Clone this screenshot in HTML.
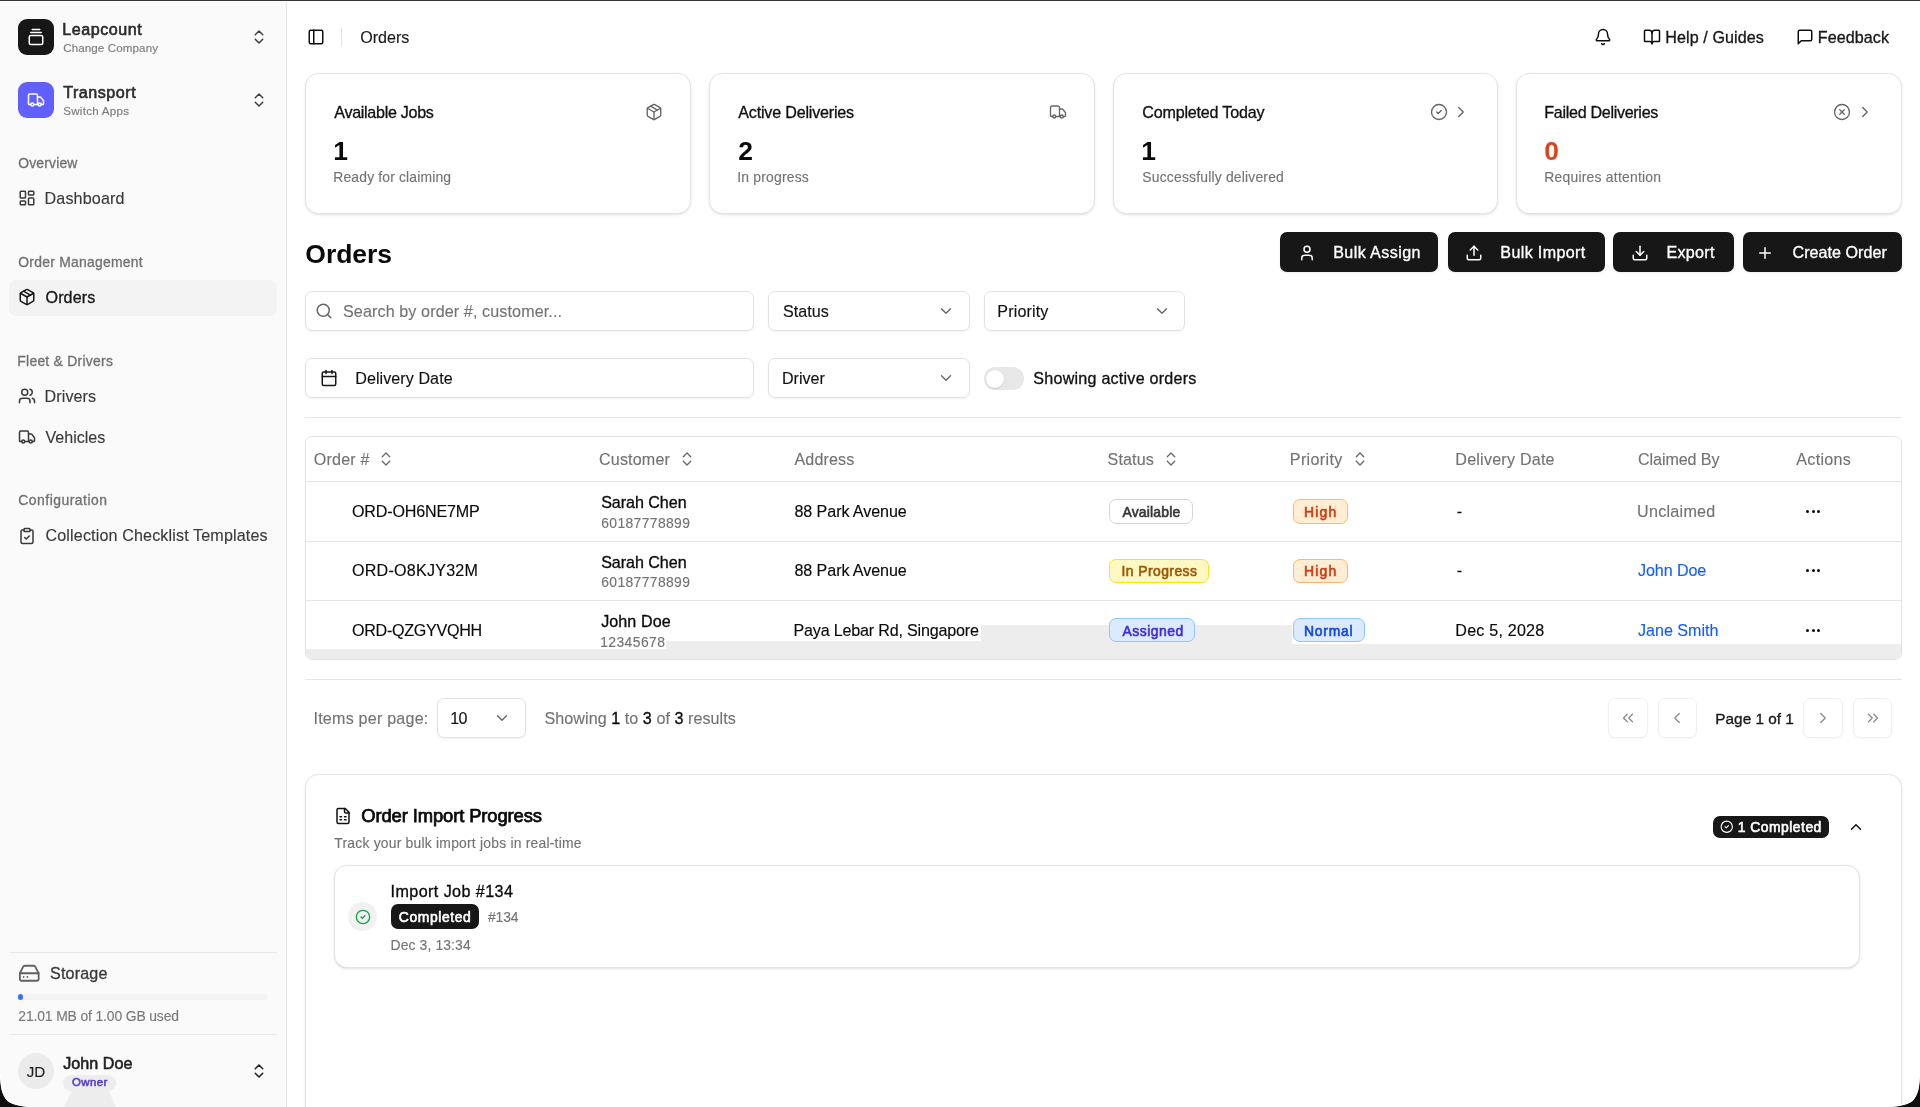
<!DOCTYPE html>
<html lang="en">
<head>
<meta charset="utf-8">
<title>Orders - Transport</title>
<style>
*{box-sizing:border-box;margin:0;padding:0}
html,body{width:1920px;height:1107px;overflow:hidden;background:#fff}
body{position:relative;font-family:"Liberation Sans",sans-serif;color:#0a0a0a;-webkit-font-smoothing:antialiased}
#app{position:absolute;left:0;top:0;width:1920px;height:1107px;will-change:transform}
.t{position:absolute;white-space:nowrap;line-height:1;font-weight:400;-webkit-text-stroke:.14px currentColor}
.t b{font-weight:400;color:#0a0a0a;-webkit-text-stroke:.32px #0a0a0a}
.w5{-webkit-text-stroke:.32px currentColor}
.w6{-webkit-text-stroke:.6px currentColor}
.w65{-webkit-text-stroke:.75px currentColor}
.w7{font-weight:700;-webkit-text-stroke:0}
.i{position:absolute;display:block;overflow:visible}
.abs{position:absolute}
.card{position:absolute;background:#fff;border:1px solid #e4e4e4;border-radius:13.5px;box-shadow:0 1px 3px rgba(0,0,0,.10),0 1px 2px -1px rgba(0,0,0,.10)}
.field{position:absolute;background:#fff;border:1px solid #e2e2e2;border-radius:7px;box-shadow:0 1px 2px rgba(0,0,0,.06)}
.btn{position:absolute;background:#171717;border-radius:7px;box-shadow:0 1px 2px rgba(0,0,0,.08)}
.pg{position:absolute;background:#fff;border:1px solid #efefef;border-radius:7px;box-shadow:0 1px 2px rgba(0,0,0,.04)}
.hl{position:absolute;height:1px;background:#e5e5e5}
.badge{position:absolute;border-radius:7px;border:1px solid transparent}
</style>
</head>
<body>
<div id="app">

<aside class="abs" style="left:0;top:2px;width:287px;height:1105px;background:#fafafa;border-right:1px solid #e6e6e6"></aside>
<nav>
<div class="abs" style="left:18px;top:19px;width:36px;height:36px;border-radius:9px;background:#171717"></div>
<svg class="i" style="left:27px;top:27.75px" width="18" height="18" viewBox="0 0 24 24" fill="none" stroke="#fff" stroke-width="2" stroke-linecap="round" stroke-linejoin="round"><path d="M7 2h10"/><path d="M5 6h14"/><rect width="18" height="12" x="3" y="10" rx="2"/></svg>
<span class="t w6" style="left:62.20px;top:21.00px;font-size:16.1px;color:#2b2b2b;letter-spacing:0.535px;">Leapcount</span>
<span class="t" style="left:63.20px;top:42.00px;font-size:11.6px;color:#7a7a7a;letter-spacing:0.103px;">Change Company</span>
<svg class="i" style="left:250px;top:28.2px" width="18" height="18" viewBox="0 0 24 24" fill="none" stroke="#3f3f3f" stroke-width="2" stroke-linecap="round" stroke-linejoin="round"><path d="m7 15 5 5 5-5"/><path d="m7 9 5-5 5 5"/></svg>
<div class="abs" style="left:18px;top:82px;width:36px;height:36px;border-radius:9px;background:#625fff"></div>
<svg class="i" style="left:26.7px;top:90.9px" width="18" height="18" viewBox="0 0 24 24" fill="none" stroke="#fff" stroke-width="2" stroke-linecap="round" stroke-linejoin="round"><path d="M14 18V6a2 2 0 0 0-2-2H4a2 2 0 0 0-2 2v11a1 1 0 0 0 1 1h2"/><path d="M15 18H9"/><path d="M19 18h2a1 1 0 0 0 1-1v-3.65a1 1 0 0 0-.22-.624l-3.48-4.35A1 1 0 0 0 17.52 8H14"/><circle cx="17" cy="18" r="2"/><circle cx="7" cy="18" r="2"/></svg>
<span class="t w6" style="left:63.20px;top:84.00px;font-size:16.1px;color:#2b2b2b;letter-spacing:0.524px;">Transport</span>
<span class="t" style="left:63.20px;top:105.00px;font-size:11.6px;color:#7a7a7a;letter-spacing:0.264px;">Switch Apps</span>
<svg class="i" style="left:250px;top:91px" width="18" height="18" viewBox="0 0 24 24" fill="none" stroke="#3f3f3f" stroke-width="2" stroke-linecap="round" stroke-linejoin="round"><path d="m7 15 5 5 5-5"/><path d="m7 9 5-5 5 5"/></svg>

<span class="t w5" style="left:18.30px;top:157.00px;font-size:13.9px;color:#717171;letter-spacing:0.163px;">Overview</span>
<svg class="i" style="left:17.9px;top:189.4px" width="18" height="18" viewBox="0 0 24 24" fill="none" stroke="#3a3a3a" stroke-width="2" stroke-linecap="round" stroke-linejoin="round"><rect width="7" height="9" x="3" y="3" rx="1"/><rect width="7" height="5" x="14" y="3" rx="1"/><rect width="7" height="9" x="14" y="12" rx="1"/><rect width="7" height="5" x="3" y="16" rx="1"/></svg><span class="t" style="left:44.50px;top:190.00px;font-size:16.1px;color:#3a3a3a;letter-spacing:0.152px;">Dashboard</span>
<span class="t w5" style="left:18.30px;top:256.00px;font-size:13.9px;color:#717171;letter-spacing:0.254px;">Order Management</span>
<div class="abs" style="left:9px;top:280px;width:268px;height:36px;border-radius:7px;background:#f3f3f3"></div>
<svg class="i" style="left:17.9px;top:288.4px" width="18" height="18" viewBox="0 0 24 24" fill="none" stroke="#171717" stroke-width="2" stroke-linecap="round" stroke-linejoin="round"><path d="M11 21.73a2 2 0 0 0 2 0l7-4A2 2 0 0 0 21 16V8a2 2 0 0 0-1-1.73l-7-4a2 2 0 0 0-2 0l-7 4A2 2 0 0 0 3 8v8a2 2 0 0 0 1 1.73z"/><path d="M12 22V12"/><polyline points="3.29 7 12 12 20.71 7"/><path d="m7.5 4.27 9 5.15"/></svg><span class="t w5" style="left:45.50px;top:289.00px;font-size:16.1px;color:#171717;letter-spacing:0.112px;">Orders</span>
<span class="t w5" style="left:17.30px;top:355.00px;font-size:13.9px;color:#717171;letter-spacing:0.263px;">Fleet &amp; Drivers</span>
<svg class="i" style="left:17.9px;top:387.4px" width="18" height="18" viewBox="0 0 24 24" fill="none" stroke="#3a3a3a" stroke-width="2" stroke-linecap="round" stroke-linejoin="round"><path d="M16 21v-2a4 4 0 0 0-4-4H6a4 4 0 0 0-4 4v2"/><circle cx="9" cy="7" r="4"/><path d="M22 21v-2a4 4 0 0 0-3-3.87"/><path d="M16 3.13a4 4 0 0 1 0 7.75"/></svg><span class="t" style="left:44.50px;top:388.00px;font-size:16.1px;color:#3a3a3a;letter-spacing:0.113px;">Drivers</span>
<svg class="i" style="left:17.9px;top:428.4px" width="18" height="18" viewBox="0 0 24 24" fill="none" stroke="#3a3a3a" stroke-width="2" stroke-linecap="round" stroke-linejoin="round"><path d="M14 18V6a2 2 0 0 0-2-2H4a2 2 0 0 0-2 2v11a1 1 0 0 0 1 1h2"/><path d="M15 18H9"/><path d="M19 18h2a1 1 0 0 0 1-1v-3.65a1 1 0 0 0-.22-.624l-3.48-4.35A1 1 0 0 0 17.52 8H14"/><circle cx="17" cy="18" r="2"/><circle cx="7" cy="18" r="2"/></svg><span class="t" style="left:45.50px;top:429.00px;font-size:16.1px;color:#3a3a3a;letter-spacing:-0.015px;">Vehicles</span>
<span class="t w5" style="left:18.30px;top:494.00px;font-size:13.9px;color:#717171;letter-spacing:0.500px;">Configuration</span>
<svg class="i" style="left:17.9px;top:526.8px" width="18" height="18" viewBox="0 0 24 24" fill="none" stroke="#3a3a3a" stroke-width="2" stroke-linecap="round" stroke-linejoin="round"><rect width="8" height="4" x="8" y="2" rx="1" ry="1"/><path d="M16 4h2a2 2 0 0 1 2 2v14a2 2 0 0 1-2 2H6a2 2 0 0 1-2-2V6a2 2 0 0 1 2-2h2"/><path d="m9 14 2 2 4-4"/></svg><span class="t" style="left:45.50px;top:527.00px;font-size:16.1px;color:#3a3a3a;letter-spacing:0.141px;">Collection Checklist Templates</span>

<div class="hl" style="left:9px;top:952px;width:268px;background:#e8e8e8"></div>
<svg class="i" style="left:17.9px;top:962.3px" width="22.5" height="22.5" viewBox="0 0 24 24" fill="none" stroke="#606060" stroke-width="1.9" stroke-linecap="round" stroke-linejoin="round"><line x1="22" x2="2" y1="12" y2="12"/><path d="M5.45 5.11 2 12v6a2 2 0 0 0 2 2h16a2 2 0 0 0 2-2v-6l-3.45-6.89A2 2 0 0 0 16.76 4H7.24a2 2 0 0 0-1.79 1.11z"/><line x1="6" x2="6.01" y1="16" y2="16"/><line x1="10" x2="10.01" y1="16" y2="16"/></svg>
<span class="t w5" style="left:50.00px;top:965.00px;font-size:16.1px;color:#3a3a3a;letter-spacing:0.179px;">Storage</span>
<div class="abs" style="left:18px;top:994px;width:250px;height:6px;border-radius:3px;background:#f3f3f3"></div>
<div class="abs" style="left:18px;top:994px;width:5px;height:6.4px;border-radius:2.6px;background:#3570ff"></div>
<span class="t" style="left:18.30px;top:1010.00px;font-size:13.9px;color:#7a7a7a;letter-spacing:-0.130px;">21.01 MB of 1.00 GB used</span>
<div class="hl" style="left:9px;top:1034px;width:268px;background:#e8e8e8"></div>
<div class="abs" style="left:18px;top:1053px;width:36px;height:36px;border-radius:18px;background:#ebebeb"></div>
<span class="t" style="left:26.80px;top:1064.00px;font-size:15.2px;color:#1f1f1f;letter-spacing:-0.095px;">JD</span>
<span class="t w6" style="left:63.20px;top:1055.00px;font-size:16.1px;color:#1f1f1f;letter-spacing:0.049px;">John Doe</span>
<svg class="i" style="left:60px;top:1088px" width="60" height="19" viewBox="0 0 60 19"><polygon points="12.5,2 48.5,2 56,19 4,19" fill="#ededed"/></svg>
<div class="abs" style="left:63.2px;top:1075px;width:52.5px;height:15.5px;border-radius:8px;background:#ededed"></div>
<span class="t w6" style="left:72.00px;top:1077.00px;font-size:11.4px;color:#5a3fd0;letter-spacing:0.433px;">Owner</span>
<svg class="i" style="left:250px;top:1062px" width="18" height="18" viewBox="0 0 24 24" fill="none" stroke="#1f1f1f" stroke-width="2" stroke-linecap="round" stroke-linejoin="round"><path d="m7 15 5 5 5-5"/><path d="m7 9 5-5 5 5"/></svg>
</nav>
<main>
<header>
<svg class="i" style="left:307.1px;top:28px" width="18" height="18" viewBox="0 0 24 24" fill="none" stroke="#0f0f0f" stroke-width="2" stroke-linecap="round" stroke-linejoin="round"><rect width="18" height="18" x="3" y="3" rx="2"/><path d="M9 3v18"/></svg>
<div class="abs" style="left:341px;top:28px;width:1px;height:18px;background:#e5e5e5"></div>
<span class="t" style="left:360.30px;top:29.00px;font-size:16.1px;color:#1a1a1a;letter-spacing:-0.028px;">Orders</span>
<svg class="i" style="left:1593.8px;top:28px" width="18" height="18" viewBox="0 0 24 24" fill="none" stroke="#0f0f0f" stroke-width="2" stroke-linecap="round" stroke-linejoin="round"><path d="M10.268 21a2 2 0 0 0 3.464 0"/><path d="M3.262 15.326A1 1 0 0 0 4 17h16a1 1 0 0 0 .74-1.673C19.41 13.956 18 12.499 18 8A6 6 0 0 0 6 8c0 4.499-1.411 5.956-2.738 7.326"/></svg>
<svg class="i" style="left:1643px;top:28px" width="18" height="18" viewBox="0 0 24 24" fill="none" stroke="#0f0f0f" stroke-width="2" stroke-linecap="round" stroke-linejoin="round"><path d="M12 7v14"/><path d="M3 18a1 1 0 0 1-1-1V4a1 1 0 0 1 1-1h5a4 4 0 0 1 4 4 4 4 0 0 1 4-4h5a1 1 0 0 1 1 1v13a1 1 0 0 1-1 1h-6a3 3 0 0 0-3 3 3 3 0 0 0-3-3z"/></svg>
<span class="t w5" style="left:1665.30px;top:29.00px;font-size:16.1px;color:#171717;letter-spacing:0.086px;">Help / Guides</span>
<svg class="i" style="left:1795.5px;top:28px" width="18" height="18" viewBox="0 0 24 24" fill="none" stroke="#0f0f0f" stroke-width="2" stroke-linecap="round" stroke-linejoin="round"><path d="M21 15a2 2 0 0 1-2 2H7l-4 4V5a2 2 0 0 1 2-2h14a2 2 0 0 1 2 2z"/></svg>
<span class="t w5" style="left:1817.80px;top:29.00px;font-size:16.1px;color:#171717;letter-spacing:0.080px;">Feedback</span>
</header>

<section>
<div class="card" style="left:305px;top:73px;width:386px;height:141px"></div><span class="t w5" style="left:334.30px;top:104.00px;font-size:16.1px;color:#111;letter-spacing:-0.304px;">Available Jobs</span><span class="t w7" style="left:333.30px;top:138.00px;font-size:26.4px;color:#0a0a0a;">1</span><span class="t" style="left:333.30px;top:171.00px;font-size:13.9px;color:#737373;letter-spacing:0.158px;">Ready for claiming</span><svg class="i" style="left:645px;top:103.3px" width="18" height="18" viewBox="0 0 24 24" fill="none" stroke="#666" stroke-width="1.8" stroke-linecap="round" stroke-linejoin="round"><path d="M11 21.73a2 2 0 0 0 2 0l7-4A2 2 0 0 0 21 16V8a2 2 0 0 0-1-1.73l-7-4a2 2 0 0 0-2 0l-7 4A2 2 0 0 0 3 8v8a2 2 0 0 0 1 1.73z"/><path d="M12 22V12"/><polyline points="3.29 7 12 12 20.71 7"/><path d="m7.5 4.27 9 5.15"/></svg>
<div class="card" style="left:709px;top:73px;width:386px;height:141px"></div><span class="t w5" style="left:738.30px;top:104.00px;font-size:16.1px;color:#111;letter-spacing:-0.194px;">Active Deliveries</span><span class="t w7" style="left:738.30px;top:138.00px;font-size:26.4px;color:#0a0a0a;">2</span><span class="t" style="left:737.30px;top:171.00px;font-size:13.9px;color:#737373;letter-spacing:0.195px;">In progress</span><svg class="i" style="left:1048.7px;top:103.3px" width="18" height="18" viewBox="0 0 24 24" fill="none" stroke="#666" stroke-width="1.8" stroke-linecap="round" stroke-linejoin="round"><path d="M14 18V6a2 2 0 0 0-2-2H4a2 2 0 0 0-2 2v11a1 1 0 0 0 1 1h2"/><path d="M15 18H9"/><path d="M19 18h2a1 1 0 0 0 1-1v-3.65a1 1 0 0 0-.22-.624l-3.48-4.35A1 1 0 0 0 17.52 8H14"/><circle cx="17" cy="18" r="2"/><circle cx="7" cy="18" r="2"/></svg>
<div class="card" style="left:1113px;top:73px;width:385px;height:141px"></div><span class="t w5" style="left:1142.30px;top:104.00px;font-size:16.1px;color:#111;letter-spacing:-0.194px;">Completed Today</span><span class="t w7" style="left:1141.30px;top:138.00px;font-size:26.4px;color:#0a0a0a;">1</span><span class="t" style="left:1142.30px;top:171.00px;font-size:13.9px;color:#737373;letter-spacing:0.195px;">Successfully delivered</span><svg class="i" style="left:1429.7px;top:103.3px" width="18" height="18" viewBox="0 0 24 24" fill="none" stroke="#666" stroke-width="1.8" stroke-linecap="round" stroke-linejoin="round"><circle cx="12" cy="12" r="10"/><path d="m9 12 2 2 4-4"/></svg><svg class="i" style="left:1452px;top:103.3px" width="18" height="18" viewBox="0 0 24 24" fill="none" stroke="#666" stroke-width="1.8" stroke-linecap="round" stroke-linejoin="round"><path d="m9 18 6-6-6-6"/></svg>
<div class="card" style="left:1516px;top:73px;width:386px;height:141px"></div><span class="t w5" style="left:1544.30px;top:104.00px;font-size:16.1px;color:#111;letter-spacing:-0.308px;">Failed Deliveries</span><span class="t w7" style="left:1544.30px;top:138.00px;font-size:26.4px;color:#d9431d;">0</span><span class="t" style="left:1544.30px;top:171.00px;font-size:13.9px;color:#737373;letter-spacing:0.234px;">Requires attention</span><svg class="i" style="left:1833px;top:103.3px" width="18" height="18" viewBox="0 0 24 24" fill="none" stroke="#666" stroke-width="1.8" stroke-linecap="round" stroke-linejoin="round"><circle cx="12" cy="12" r="10"/><path d="m15 9-6 6"/><path d="m9 9 6 6"/></svg><svg class="i" style="left:1855.7px;top:103.3px" width="18" height="18" viewBox="0 0 24 24" fill="none" stroke="#666" stroke-width="1.8" stroke-linecap="round" stroke-linejoin="round"><path d="m9 18 6-6-6-6"/></svg>
</section>

<section>
<span class="t w7" style="left:305.30px;top:241.00px;font-size:26.5px;color:#0a0a0a;letter-spacing:-0.034px;">Orders</span>
<div class="btn" style="left:1279.8px;top:232px;width:158px;height:40px"></div><svg class="i" style="left:1297.5px;top:243.5px" width="18" height="18" viewBox="0 0 24 24" fill="none" stroke="#fff" stroke-width="2" stroke-linecap="round" stroke-linejoin="round"><path d="M19 21v-2a4 4 0 0 0-4-4H9a4 4 0 0 0-4 4v2"/><circle cx="12" cy="7" r="4"/></svg><span class="t w5" style="left:1333.20px;top:244.00px;font-size:16.1px;color:#fff;letter-spacing:0.405px;">Bulk Assign</span>
<div class="btn" style="left:1447.5px;top:232px;width:157px;height:40px"></div><svg class="i" style="left:1465px;top:243.5px" width="18" height="18" viewBox="0 0 24 24" fill="none" stroke="#fff" stroke-width="2" stroke-linecap="round" stroke-linejoin="round"><path d="M21 15v4a2 2 0 0 1-2 2H5a2 2 0 0 1-2-2v-4"/><polyline points="17 8 12 3 7 8"/><line x1="12" x2="12" y1="3" y2="15"/></svg><span class="t w5" style="left:1500.30px;top:244.00px;font-size:16.1px;color:#fff;letter-spacing:0.358px;">Bulk Import</span>
<div class="btn" style="left:1613.3px;top:232px;width:120.5px;height:40px"></div><svg class="i" style="left:1631.3px;top:243.5px" width="18" height="18" viewBox="0 0 24 24" fill="none" stroke="#fff" stroke-width="2" stroke-linecap="round" stroke-linejoin="round"><path d="M21 15v4a2 2 0 0 1-2 2H5a2 2 0 0 1-2-2v-4"/><polyline points="7 10 12 15 17 10"/><line x1="12" x2="12" y1="15" y2="3"/></svg><span class="t w5" style="left:1666.50px;top:244.00px;font-size:16.1px;color:#fff;letter-spacing:0.291px;">Export</span>
<div class="btn" style="left:1743px;top:232px;width:159px;height:40px"></div><svg class="i" style="left:1756.3px;top:243.5px" width="18" height="18" viewBox="0 0 24 24" fill="none" stroke="#fff" stroke-width="2" stroke-linecap="round" stroke-linejoin="round"><path d="M5 12h14"/><path d="M12 5v14"/></svg><span class="t w5" style="left:1792.50px;top:244.00px;font-size:16.1px;color:#fff;letter-spacing:0.040px;">Create Order</span>

<div class="field" style="left:305px;top:291px;width:449px;height:40px"></div>
<svg class="i" style="left:314.5px;top:302px" width="18" height="18" viewBox="0 0 24 24" fill="none" stroke="#666" stroke-width="2" stroke-linecap="round" stroke-linejoin="round"><circle cx="11" cy="11" r="8"/><path d="m21 21-4.3-4.3"/></svg>
<span class="t" style="left:343.00px;top:303.00px;font-size:16.1px;color:#737373;letter-spacing:0.117px;">Search by order #, customer...</span>
<div class="field" style="left:768px;top:291px;width:202px;height:40px"></div>
<span class="t" style="left:783.00px;top:303.00px;font-size:16.1px;color:#111;letter-spacing:0.041px;">Status</span>
<svg class="i" style="left:937.3px;top:302px" width="18" height="18" viewBox="0 0 24 24" fill="none" stroke="#666" stroke-width="1.8" stroke-linecap="round" stroke-linejoin="round"><path d="m6 9 6 6 6-6"/></svg>
<div class="field" style="left:984px;top:291px;width:201px;height:40px"></div>
<span class="t" style="left:997.30px;top:303.00px;font-size:16.1px;color:#111;letter-spacing:0.138px;">Priority</span>
<svg class="i" style="left:1152.5px;top:302px" width="18" height="18" viewBox="0 0 24 24" fill="none" stroke="#666" stroke-width="1.8" stroke-linecap="round" stroke-linejoin="round"><path d="m6 9 6 6 6-6"/></svg>

<div class="field" style="left:305px;top:358px;width:449px;height:40px"></div>
<svg class="i" style="left:320px;top:369.3px" width="18" height="18" viewBox="0 0 24 24" fill="none" stroke="#171717" stroke-width="2" stroke-linecap="round" stroke-linejoin="round"><path d="M8 2v4"/><path d="M16 2v4"/><rect width="18" height="18" x="3" y="4" rx="2"/><path d="M3 10h18"/></svg>
<span class="t" style="left:355.20px;top:370.00px;font-size:16.1px;color:#111;letter-spacing:0.070px;">Delivery Date</span>
<div class="field" style="left:768px;top:358px;width:202px;height:40px"></div>
<span class="t" style="left:782.00px;top:370.00px;font-size:16.1px;color:#111;letter-spacing:-0.013px;">Driver</span>
<svg class="i" style="left:937.3px;top:369.3px" width="18" height="18" viewBox="0 0 24 24" fill="none" stroke="#666" stroke-width="1.8" stroke-linecap="round" stroke-linejoin="round"><path d="m6 9 6 6 6-6"/></svg>
<div class="abs" style="left:984px;top:367.3px;width:40px;height:22.4px;border-radius:11.2px;background:#e7e7e7"></div>
<div class="abs" style="left:986px;top:369.5px;width:18px;height:18px;border-radius:9px;background:#fff;box-shadow:0 1px 2px rgba(0,0,0,.12)"></div>
<span class="t w5" style="left:1033.30px;top:370.00px;font-size:16.1px;color:#111;letter-spacing:0.235px;">Showing active orders</span>
<div class="hl" style="left:305px;top:417px;width:1597px"></div>
</section>

<section>
<div class="abs" style="left:305px;top:436px;width:1597px;height:224px;border:1px solid #e3e3e3;border-radius:7px;background:#fff"></div>
<div class="hl" style="left:306px;top:481px;width:1595px"></div>
<div class="hl" style="left:306px;top:541px;width:1595px"></div>
<div class="hl" style="left:306px;top:600px;width:1595px"></div>
<div class="abs" style="left:306px;top:649px;width:1595px;height:10px;background:#ededed;border-radius:0 0 6px 6px"></div>
<div class="abs" style="left:666px;top:641px;width:315px;height:9px;background:#ededed"></div>
<div class="abs" style="left:981px;top:625px;width:311px;height:25px;background:#ededed"></div>
<div class="abs" style="left:1292px;top:644px;width:609px;height:6px;background:#ededed"></div>

<span class="t" style="left:313.80px;top:451.00px;font-size:16.1px;color:#737373;letter-spacing:0.198px;">Order #</span><svg class="i" style="left:376.5px;top:450.2px" width="18" height="18" viewBox="0 0 24 24" fill="none" stroke="#666" stroke-width="1.7" stroke-linecap="round" stroke-linejoin="round"><path d="m7 15 5 5 5-5"/><path d="m7 9 5-5 5 5"/></svg>
<span class="t" style="left:599.00px;top:451.00px;font-size:16.1px;color:#737373;letter-spacing:0.156px;">Customer</span><svg class="i" style="left:678px;top:450.2px" width="18" height="18" viewBox="0 0 24 24" fill="none" stroke="#666" stroke-width="1.7" stroke-linecap="round" stroke-linejoin="round"><path d="m7 15 5 5 5-5"/><path d="m7 9 5-5 5 5"/></svg>
<span class="t" style="left:794.50px;top:451.00px;font-size:16.1px;color:#737373;letter-spacing:0.133px;">Address</span>
<span class="t" style="left:1107.50px;top:451.00px;font-size:16.1px;color:#737373;letter-spacing:0.141px;">Status</span><svg class="i" style="left:1161.8px;top:450.2px" width="18" height="18" viewBox="0 0 24 24" fill="none" stroke="#666" stroke-width="1.7" stroke-linecap="round" stroke-linejoin="round"><path d="m7 15 5 5 5-5"/><path d="m7 9 5-5 5 5"/></svg>
<span class="t" style="left:1289.80px;top:451.00px;font-size:16.1px;color:#737373;letter-spacing:0.353px;">Priority</span><svg class="i" style="left:1351px;top:450.2px" width="18" height="18" viewBox="0 0 24 24" fill="none" stroke="#666" stroke-width="1.7" stroke-linecap="round" stroke-linejoin="round"><path d="m7 15 5 5 5-5"/><path d="m7 9 5-5 5 5"/></svg>
<span class="t" style="left:1455.30px;top:451.00px;font-size:16.1px;color:#737373;letter-spacing:0.220px;">Delivery Date</span>
<span class="t" style="left:1638.00px;top:451.00px;font-size:16.1px;color:#737373;letter-spacing:-0.083px;">Claimed By</span>
<span class="t" style="left:1796.30px;top:451.00px;font-size:16.1px;color:#737373;letter-spacing:0.294px;">Actions</span>

<span class="t" style="left:352.00px;top:503.00px;font-size:16.1px;color:#0a0a0a;letter-spacing:-0.176px;">ORD-OH6NE7MP</span>
<span class="t w5" style="left:601.20px;top:494.00px;font-size:16.1px;color:#0a0a0a;letter-spacing:-0.051px;">Sarah Chen</span>
<span class="t" style="left:601.20px;top:517.00px;font-size:13.9px;color:#737373;letter-spacing:0.374px;">60187778899</span>
<span class="t" style="left:794.50px;top:503.00px;font-size:16.1px;color:#0a0a0a;letter-spacing:-0.084px;">88 Park Avenue</span>
<div class="badge" style="left:1109.3px;top:499px;width:83.3px;height:25px;background:#fff;border-color:#d6d6d6"></div><span class="t w6" style="left:1122.50px;top:506.00px;font-size:13.9px;color:#363636;letter-spacing:0.200px;">Available</span>
<div class="badge" style="left:1292.5px;top:499px;width:55px;height:25px;background:#ffedd4;border-color:#ffb86a"></div><span class="t w6" style="left:1304.00px;top:506.00px;font-size:13.9px;color:#d03a14;letter-spacing:1.216px;">High</span>
<span class="t" style="left:1456.80px;top:503.00px;font-size:16.1px;color:#0a0a0a;">-</span>
<span class="t" style="left:1637.00px;top:503.00px;font-size:16.1px;color:#737373;letter-spacing:0.277px;">Unclaimed</span>
<div class="abs" style="left:1806.3px;top:509.8px;width:3px;height:3px;border-radius:2px;background:#0a0a0a"></div><div class="abs" style="left:1811.6px;top:509.8px;width:3px;height:3px;border-radius:2px;background:#0a0a0a"></div><div class="abs" style="left:1816.9px;top:509.8px;width:3px;height:3px;border-radius:2px;background:#0a0a0a"></div>

<span class="t" style="left:352.00px;top:562.00px;font-size:16.1px;color:#0a0a0a;letter-spacing:0.226px;">ORD-O8KJY32M</span>
<span class="t w5" style="left:601.20px;top:554.00px;font-size:16.1px;color:#0a0a0a;letter-spacing:-0.051px;">Sarah Chen</span>
<span class="t" style="left:601.20px;top:576.00px;font-size:13.9px;color:#737373;letter-spacing:0.374px;">60187778899</span>
<span class="t" style="left:794.50px;top:562.00px;font-size:16.1px;color:#0a0a0a;letter-spacing:-0.084px;">88 Park Avenue</span>
<div class="badge" style="left:1109.3px;top:558.5px;width:100px;height:24.4px;background:#fef9c2;border-color:#ffdf20"></div><span class="t w6" style="left:1121.50px;top:565.00px;font-size:13.9px;color:#9a5708;letter-spacing:0.441px;">In Progress</span>
<div class="badge" style="left:1292.5px;top:558.5px;width:55px;height:24.4px;background:#ffedd4;border-color:#ffb86a"></div><span class="t w6" style="left:1304.00px;top:565.00px;font-size:13.9px;color:#d03a14;letter-spacing:1.216px;">High</span>
<span class="t" style="left:1456.80px;top:562.00px;font-size:16.1px;color:#0a0a0a;">-</span>
<span class="t" style="left:1638.00px;top:562.00px;font-size:16.1px;color:#155dfc;letter-spacing:-0.094px;">John Doe</span>
<div class="abs" style="left:1806.3px;top:569.3px;width:3px;height:3px;border-radius:2px;background:#0a0a0a"></div><div class="abs" style="left:1811.6px;top:569.3px;width:3px;height:3px;border-radius:2px;background:#0a0a0a"></div><div class="abs" style="left:1816.9px;top:569.3px;width:3px;height:3px;border-radius:2px;background:#0a0a0a"></div>

<span class="t" style="left:352.00px;top:622.00px;font-size:16.1px;color:#0a0a0a;letter-spacing:-0.283px;">ORD-QZGYVQHH</span>
<span class="t w5" style="left:601.20px;top:613.00px;font-size:16.1px;color:#0a0a0a;letter-spacing:0.078px;">John Doe</span>
<span class="t wb" style="left:600.20px;top:636.00px;font-size:13.9px;color:#737373;letter-spacing:0.416px;">12345678</span>
<span class="t wb" style="left:793.50px;top:622.00px;font-size:16.1px;color:#0a0a0a;letter-spacing:-0.184px;">Paya Lebar Rd, Singapore</span>
<div class="badge" style="left:1109.3px;top:618px;width:86px;height:24.4px;background:#dbeafe;border-color:#8ec5ff"></div><span class="t w6" style="left:1122.50px;top:625.00px;font-size:13.9px;color:#432dd7;letter-spacing:0.510px;">Assigned</span>
<div class="badge" style="left:1292.5px;top:618px;width:72.5px;height:24.4px;background:#dbeafe;border-color:#8ec5ff"></div><span class="t w6" style="left:1304.00px;top:625.00px;font-size:13.9px;color:#1447e6;letter-spacing:0.764px;">Normal</span>
<span class="t" style="left:1455.30px;top:622.00px;font-size:16.1px;color:#0a0a0a;letter-spacing:0.215px;">Dec 5, 2028</span>
<span class="t" style="left:1638.00px;top:622.00px;font-size:16.1px;color:#155dfc;letter-spacing:-0.007px;">Jane Smith</span>
<div class="abs" style="left:1806.3px;top:628.8px;width:3px;height:3px;border-radius:2px;background:#0a0a0a"></div><div class="abs" style="left:1811.6px;top:628.8px;width:3px;height:3px;border-radius:2px;background:#0a0a0a"></div><div class="abs" style="left:1816.9px;top:628.8px;width:3px;height:3px;border-radius:2px;background:#0a0a0a"></div>
<div class="hl" style="left:305px;top:679px;width:1597px"></div>
</section>

<section>
<span class="t" style="left:313.50px;top:710.00px;font-size:16.1px;color:#737373;letter-spacing:0.210px;">Items per page:</span>
<div class="field" style="left:436.5px;top:698px;width:89px;height:39.5px"></div>
<span class="t" style="left:450.30px;top:710.00px;font-size:16.1px;color:#111;letter-spacing:-0.656px;">10</span>
<svg class="i" style="left:493px;top:709px" width="18" height="18" viewBox="0 0 24 24" fill="none" stroke="#666" stroke-width="1.8" stroke-linecap="round" stroke-linejoin="round"><path d="m6 9 6 6 6-6"/></svg>
<span class="t" style="left:544.50px;top:710.00px;font-size:16.1px;color:#737373;letter-spacing:0.063px;">Showing <b>1</b> to <b>3</b> of <b>3</b> results</span>
<div class="pg" style="left:1608.2px;top:698px;width:39.5px;height:39.5px"></div><svg class="i" style="left:1618.95px;top:708.75px" width="18" height="18" viewBox="0 0 24 24" fill="none" stroke="#8a8a8a" stroke-width="1.7" stroke-linecap="round" stroke-linejoin="round"><path d="m11 17-5-5 5-5"/><path d="m18 17-5-5 5-5"/></svg><div class="pg" style="left:1657.5px;top:698px;width:39.5px;height:39.5px"></div><svg class="i" style="left:1668.25px;top:708.75px" width="18" height="18" viewBox="0 0 24 24" fill="none" stroke="#8a8a8a" stroke-width="1.7" stroke-linecap="round" stroke-linejoin="round"><path d="m15 18-6-6 6-6"/></svg>
<span class="t w5" style="left:1715.30px;top:711.00px;font-size:15.4px;color:#171717;letter-spacing:-0.017px;">Page 1 of 1</span>
<div class="pg" style="left:1803.2px;top:698px;width:39.5px;height:39.5px"></div><svg class="i" style="left:1813.95px;top:708.75px" width="18" height="18" viewBox="0 0 24 24" fill="none" stroke="#8a8a8a" stroke-width="1.7" stroke-linecap="round" stroke-linejoin="round"><path d="m9 18 6-6-6-6"/></svg><div class="pg" style="left:1852.8px;top:698px;width:39.5px;height:39.5px"></div><svg class="i" style="left:1863.55px;top:708.75px" width="18" height="18" viewBox="0 0 24 24" fill="none" stroke="#8a8a8a" stroke-width="1.7" stroke-linecap="round" stroke-linejoin="round"><path d="m6 17 5-5-5-5"/><path d="m13 17 5-5-5-5"/></svg>
</section>

<section>
<div class="card" style="left:305px;top:774px;width:1597px;height:360px;border-radius:13.5px 13.5px 0 0"></div>
<svg class="i" style="left:333.9px;top:806.6px" width="18" height="18" viewBox="0 0 24 24" fill="none" stroke="#111" stroke-width="2" stroke-linecap="round" stroke-linejoin="round"><path d="M15 2H6a2 2 0 0 0-2 2v16a2 2 0 0 0 2 2h12a2 2 0 0 0 2-2V7Z"/><path d="M14 2v4a2 2 0 0 0 2 2h4"/><path d="M8 13h2"/><path d="M14 13h2"/><path d="M8 17h2"/><path d="M14 17h2"/></svg>
<span class="t w6 w65" style="left:361.30px;top:807.00px;font-size:18.4px;color:#0a0a0a;letter-spacing:-0.112px;">Order Import Progress</span>
<span class="t" style="left:334.30px;top:837.00px;font-size:13.9px;color:#737373;letter-spacing:0.216px;">Track your bulk import jobs in real-time</span>
<div class="badge" style="left:1712.5px;top:815.7px;width:116.3px;height:22.4px;background:#171717"></div>
<svg class="i" style="left:1720px;top:820.2px" width="13.5" height="13.5" viewBox="0 0 24 24" fill="none" stroke="#fff" stroke-width="2" stroke-linecap="round" stroke-linejoin="round"><circle cx="12" cy="12" r="10"/><path d="m9 12 2 2 4-4"/></svg>
<span class="t w6" style="left:1737.80px;top:821.00px;font-size:13.9px;color:#fff;letter-spacing:0.476px;">1 Completed</span>
<svg class="i" style="left:1846.8px;top:818px" width="18" height="18" viewBox="0 0 24 24" fill="none" stroke="#171717" stroke-width="2" stroke-linecap="round" stroke-linejoin="round"><path d="m18 15-6-6-6 6"/></svg>
<div class="card" style="left:334px;top:865px;width:1526px;height:103px;border-radius:13px"></div>
<div class="abs" style="left:348.2px;top:902.2px;width:29px;height:29px;border-radius:15px;background:#f1f1f1"></div>
<svg class="i" style="left:354.7px;top:908.8px" width="16" height="16" viewBox="0 0 24 24" fill="none" stroke="#16a34a" stroke-width="2" stroke-linecap="round" stroke-linejoin="round"><circle cx="12" cy="12" r="10"/><path d="m9 12 2 2 4-4"/></svg>
<span class="t w5" style="left:390.60px;top:883.00px;font-size:16.1px;color:#0a0a0a;letter-spacing:0.424px;">Import Job #134</span>
<div class="badge" style="left:390.8px;top:904.3px;width:88px;height:24.4px;background:#171717"></div>
<span class="t w6" style="left:398.80px;top:911.00px;font-size:13.9px;color:#fff;letter-spacing:0.605px;">Completed</span>
<span class="t" style="left:488.00px;top:911.00px;font-size:13.9px;color:#737373;letter-spacing:-0.127px;">#134</span>
<span class="t" style="left:390.60px;top:939.00px;font-size:13.9px;color:#737373;letter-spacing:0.115px;">Dec 3, 13:34</span>
</section>
</main>
<div class="abs" style="left:0;top:0;width:1920px;height:1px;background:#35373a"></div>
<svg class="i" style="left:0;top:1067px" width="40" height="40" viewBox="0 0 40 40"><path d="M0 6 C0.6 19 1.5 28 8 34.3 C13 37.6 20 39.2 31 40 L0 40Z" fill="#0e0e0e"/><path d="M0.3 6 C0.9 19 1.8 28 8.2 34 C13 37.2 20 38.8 31 39.6" fill="none" stroke="#fff" stroke-width="1.1"/></svg>
<svg class="i" style="left:1880px;top:1067px" width="40" height="40" viewBox="0 0 40 40"><path d="M40 6 C39.4 19 38.5 28 32 34.3 C27 37.6 20 39.2 9 40 L40 40Z" fill="#0e0e0e"/><path d="M39.7 6 C39.1 19 38.2 28 31.8 34 C27 37.2 20 38.8 9 39.6" fill="none" stroke="#fff" stroke-width="1.1"/></svg>

</div>
</body>
</html>
